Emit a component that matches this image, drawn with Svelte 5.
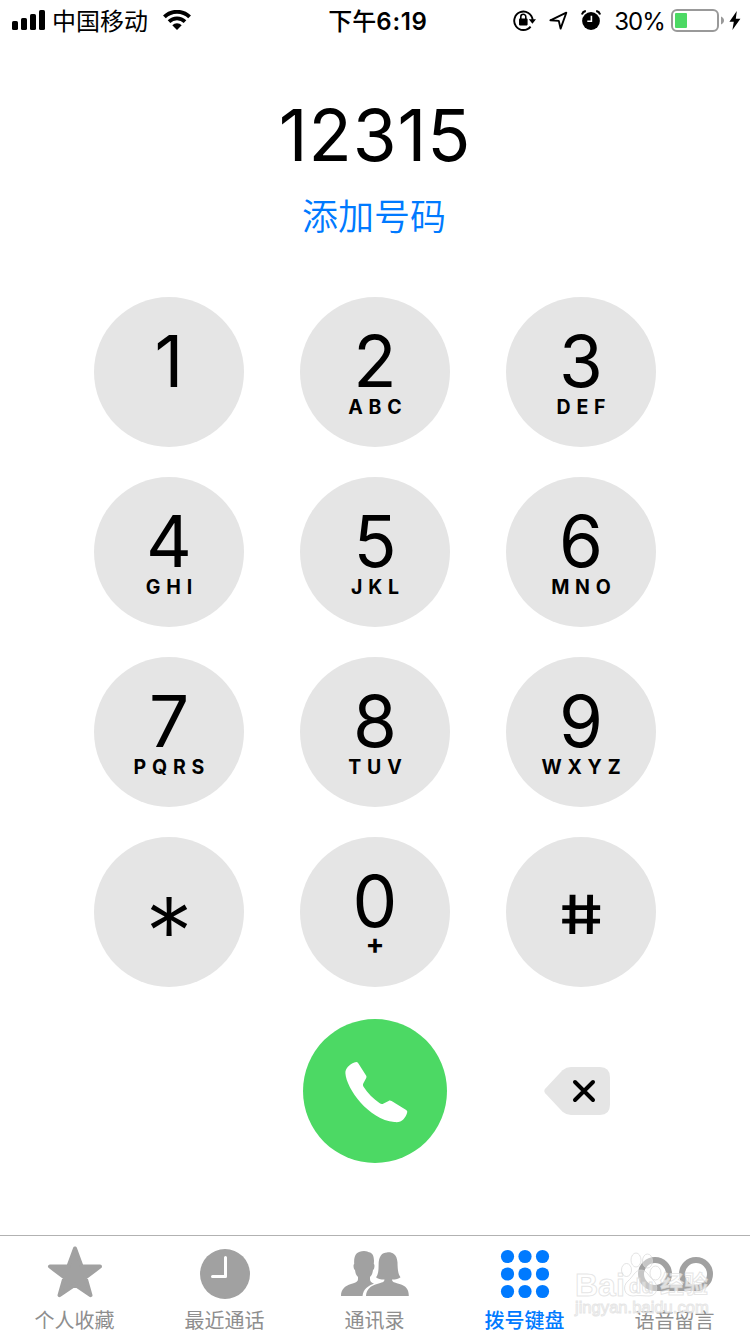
<script>
  let number = $state('12315');

  const keys = [
    { digit: '1', letters: '' },
    { digit: '2', letters: 'ABC' },
    { digit: '3', letters: 'DEF' },
    { digit: '4', letters: 'GHI' },
    { digit: '5', letters: 'JKL' },
    { digit: '6', letters: 'MNO' },
    { digit: '7', letters: 'PQRS' },
    { digit: '8', letters: 'TUV' },
    { digit: '9', letters: 'WXYZ' },
    { digit: '*', kind: 'star' },
    { digit: '0', letters: '+', kind: 'zero' },
    { digit: '#', kind: 'hash' },
  ];

  const tabs = [
    { id: 'favorites', label: '个人收藏' },
    { id: 'recents', label: '最近通话' },
    { id: 'contacts', label: '通讯录' },
    { id: 'keypad', label: '拨号键盘' },
    { id: 'voicemail', label: '语音留言' },
  ];

  let active = $state('keypad');

  const press = (d) => (number += d);
  const erase = () => (number = number.slice(0, -1));
</script>

<div class="phone">
  <header class="status">
    <div class="left">
      <svg class="signal" width="34" height="20" viewBox="0 0 34 20">
        <rect x="0" y="11" width="6" height="9" rx="1.6" />
        <rect x="9" y="8" width="6" height="12" rx="1.6" />
        <rect x="18" y="4" width="6" height="16" rx="1.6" />
        <rect x="27" y="0" width="6" height="20" rx="1.6" />
      </svg>
      <span class="carrier">中国移动</span>
      <svg width="28" height="20" viewBox="0 0 28 20">
        <path d="M1.4 6.9a18 18 0 0 1 25.2 0" fill="none" stroke="#000" stroke-width="3.9" />
        <path d="M6 11.6a11.4 11.4 0 0 1 16 0" fill="none" stroke="#000" stroke-width="3.7" />
        <path d="M9.3 15.3a6.6 6.6 0 0 1 9.4 0L14 20z" />
      </svg>
    </div>
    <div class="time"><span>下午</span>6:19</div>
    <div class="right">
      <!-- rotation lock -->
      <svg width="24" height="22" viewBox="0 0 24 22">
        <path d="M17.6 17.6a9.2 9.2 0 1 1 2-6.6" fill="none" stroke="#000" stroke-width="1.9" />
        <path d="M15.8 10.2h7.2l-3.6 4.5z" />
        <rect x="6" y="9.6" width="8.6" height="6.8" rx=".8" />
        <path d="M7.8 10V7.8a2.5 2.5 0 0 1 5 0V10" fill="none" stroke="#000" stroke-width="1.6" />
      </svg>
      <svg class="arrow" width="19" height="19" viewBox="0 0 19 19">
        <path d="M1.4 9.3 17.3 1.7 11.6 17.6 9.8 9.9z" fill="none" stroke="#000" stroke-width="1.9" stroke-linejoin="round" />
      </svg>
      <svg class="alarm" width="20" height="20" viewBox="0 0 20 20">
        <circle cx="10" cy="11" r="8.9" />
        <path d="M.9 4.4A5 5 0 0 1 4.8.9M15.2.9a5 5 0 0 1 3.9 3.5" fill="none" stroke="#000" stroke-width="2" />
        <path d="M10.4 5.8v5.4H6.3" fill="none" stroke="#fff" stroke-width="1.6" />
      </svg>
      <span class="percent">30%</span>
      <svg width="54" height="23" viewBox="0 0 54 23">
        <rect x="1" y="1" width="46" height="21" rx="5" fill="none" stroke="#999" stroke-width="2" />
        <rect x="4" y="4" width="12" height="15" rx="1" fill="#4cd964" />
        <path d="M50 7.5c4 1.6 4 6.4 0 8z" fill="#999" />
      </svg>
      <svg class="bolt" width="12" height="19" viewBox="0 0 12 19">
        <path d="M7.8 0 .4 10.7h4.4L3.4 19 11.4 7.8H6.8z" />
      </svg>
    </div>
  </header>

  <div class="number">{number}</div>
  <button class="add">添加号码</button>

  <main class="keys">
    {#each keys as key}
      <button class="key {key.kind ?? ''}" onclick={() => press(key.digit)}>
        <span class="digit">{key.digit}</span>
        {#if key.letters}
          <span class="letters">{key.letters}</span>
        {/if}
      </button>
    {/each}
  </main>

  <div class="actions">
    <button class="call" aria-label="呼叫">
      <svg width="64" height="64" viewBox="0 0 64 64">
        <path
          fill="#fff"
          d="M9.3 1.6c1.600-.7 2.900-.8 3.800.5l7.800 12.200c.8 1.200.7 2 .2 3l-2.700 5c-.8 1.500-.5 2.400.5 4 3.600 5.700 9.400 11.500 15.500 15.800 1.700 1.200 2.700 1.300 4.200.5l5-2.700c1.100-.6 1.900-.5 3 .2l14.200 8.600c1.400.9 1.700 1.600 1.300 3-.6 2.200-2 4.800-3.600 6.600-2.300 2.700-5.400 3.200-9.200 2.800C36.300 59.800 24.500 51.500 15.500 41.500 7 32 .8 20 .4 12.300.2 7.500 4.500 3.500 9.300 1.600z"
        />
      </svg>
    </button>
    <button class="erase" aria-label="删除" onclick={erase}>
      <svg width="67" height="48" viewBox="0 0 67 48">
        <path d="M18.5 3.3Q22.5 0 27 0H56Q66 0 66 10.5v27Q66 48 56 48H27q-4.5 0-8.5-3.3L1.2 26.2Q-.6 24 1.2 21.8z" fill="#e5e5e5" />
        <path d="M31 15l18 18M49 15l-18 18" stroke="#000" stroke-width="4" stroke-linecap="round" />
      </svg>
    </button>
  </div>

  <nav class="tabs">
    {#each tabs as tab}
      <button class="tab" class:active={active === tab.id} onclick={() => (active = tab.id)}>
        <svg width="76" height="56" viewBox="0 0 76 56">
          {#if tab.id === 'favorites'}
            <path
              d="M38 4.5 44.6 22.5H63L48.5 33.5 53.5 51.2 38 40.6 22.5 51.2 27.5 33.5 13 22.5H31.4z"
              stroke="currentColor"
              stroke-width="4"
              stroke-linejoin="round"
            />
          {:else if tab.id === 'recents'}
            <circle cx="38" cy="30" r="25" />
            <path d="M38.5 13.5V32.5H25.5" fill="none" stroke="#fff" stroke-width="3" stroke-linecap="round" stroke-linejoin="round" />
          {:else if tab.id === 'contacts'}
            <path d="M4 52c0-7 4-10 10-12 5-1.5 7-2.5 7-5v-2c-2-2-2.6-4-3-7-1.5-.5-2-5.5-.8-6C16.5 11 20 7 27 7c3 0 4 1 5 1.3 4.5.7 5.5 6 4.8 11.7 1.2.5.7 5.5-.8 6-.4 3-1 5-3 7v2c0 2.5 1 3.500 4 4.800-6 2.200-10.500 5-11.500 12.200z" />
            <path d="M29 52c.5-7 4.500-10 11-12 5-1.500 7.500-2 7.500-4.500-4 0-7-.8-8.500-2.300 2-2 2.600-6 2.600-12C41.600 12 45 8.500 50 8.500c1.500-.8 10-1 10.500 10 .1 7 .7 12 3 14.700-1.800 1.500-4.500 2.300-8.500 2.300 0 2.500 2.500 3 7.500 4.500 6.500 2 9.300 5 9.300 12z" />
          {:else if tab.id === 'keypad'}
            {#each [12.5, 30, 47.5] as cy}
              {#each [20.5, 38, 55.5] as cx}
                <circle {cx} {cy} r="6.6" />
              {/each}
            {/each}
          {:else}
            <g fill="none" stroke="currentColor" stroke-width="6">
              <circle cx="18" cy="30" r="14" />
              <circle cx="59" cy="30" r="14" />
              <path d="M18 44h41" />
            </g>
          {/if}
        </svg>
        <span>{tab.label}</span>
      </button>
    {/each}
  </nav>

  <div class="watermark">
    <div class="brand">
      <span class="bai">Bai</span>
      <svg width="42" height="48" viewBox="0 0 42 48">
        <ellipse cx="6.5" cy="20" rx="5" ry="6.5" />
        <ellipse cx="16" cy="10" rx="5" ry="7" />
        <ellipse cx="27.5" cy="11" rx="5" ry="7" />
        <ellipse cx="35.5" cy="23" rx="5.5" ry="7" />
        <path d="M21 20c6 0 8 7 12 10 6 5 5 16-4 16-5 0-11-1-16 0-9 0-11-10-5-15 5-4 7-11 13-11z" />
        <text x="9" y="43" font-size="20">du</text>
      </svg>
      <span class="exp">经验</span>
    </div>
    <div class="site">jingyan.baidu.com</div>
  </div>
</div>

<style>
  :global(body) {
    margin: 0;
    background: #fff;
  }

  .phone {
    position: relative;
    display: flex;
    flex-direction: column;
    width: 750px;
    height: 1334px;
    overflow: hidden;
    background: #fff;
    color: #000;
    font-family: Inter, "Noto Sans CJK SC", sans-serif;
  }

  button {
    padding: 0;
    border: 0;
    background: none;
    color: inherit;
    font: inherit;
  }

  svg {
    display: block;
    flex-shrink: 0;
  }

  .status {
    display: grid;
    grid-template-columns: 1fr auto 1fr;
    align-items: center;
    height: 40px;
    padding: 0 9px 0 12px;
    font-size: 24px;
    line-height: 40px;
  }

  .left,
  .right {
    display: flex;
    align-items: center;
  }

  .right { justify-content: flex-end; }

  .carrier {
    margin: 3px 15px 0 6px;
    line-height: 37px;
  }

  .time {
    padding: 3px 0 0 3px;
    font-weight: 600;
    line-height: 37px;
    letter-spacing: 0.7px;
  }

  .time span {
    font-weight: 500;
    letter-spacing: 0;
  }

  .arrow { margin-left: 12px; }
  .alarm { margin: 0 13px; }

  .percent {
    margin: 3px 6px 0 0;
    line-height: 37px;
    letter-spacing: -0.9px;
  }

  .bolt { margin-left: 4px; }

  .number {
    height: 92px;
    margin-top: 49px;
    font-size: 71px;
    line-height: 92px;
    letter-spacing: 0.9px;
    text-align: center;
  }

  .add {
    align-self: center;
    height: 52px;
    margin: 10px 2px 0 0;
    color: #007aff;
    font-size: 36px;
    font-weight: 350;
    line-height: 52px;
  }

  .keys {
    display: grid;
    grid-template-columns: repeat(3, 150px);
    grid-auto-rows: 150px;
    gap: 30px 56px;
    justify-content: center;
    margin-top: 54px;
  }

  .key {
    display: flex;
    flex-direction: column;
    align-items: center;
    border-radius: 50%;
    background: #e5e5e5;
  }

  .digit {
    height: 72px;
    margin-top: 28px;
    font-size: 71px;
    line-height: 72px;
  }

  .letters {
    height: 20px;
    font-size: 19.5px;
    font-weight: 650;
    line-height: 20px;
    letter-spacing: 5.8px;
    text-indent: 5.8px;
  }

  .star .digit {
    margin-top: 59px;
    font-size: 95px;
    font-weight: 350;
  }

  .hash .digit {
    margin-top: 42px;
    font-size: 54px;
    font-weight: 500;
    transform: scaleX(1.27) skewX(9deg);
  }

  .zero .letters {
    font-size: 28px;
    font-weight: 650;
    line-height: 14px;
    letter-spacing: 0;
    text-indent: 0;
  }

  .actions {
    display: grid;
    grid-template-columns: repeat(3, 150px);
    column-gap: 56px;
    justify-content: center;
    align-items: center;
    height: 144px;
    margin-top: 32px;
  }

  .call {
    display: flex;
    grid-column: 2;
    align-items: center;
    justify-content: center;
    justify-self: center;
    width: 144px;
    height: 144px;
    border-radius: 50%;
    background: #4cd964;
  }

  .call svg { margin: 3px 0 0 3px; }

  .erase {
    justify-self: start;
    margin-left: 38px;
  }

  .tabs {
    display: grid;
    grid-template-columns: repeat(5, 1fr);
    height: 98px;
    margin-top: auto;
    border-top: 1px solid #b2b2b2;
  }

  .tab {
    display: flex;
    flex-direction: column;
    align-items: center;
    padding-top: 8px;
    color: #a1a1a1;
    font-size: 20px;
    line-height: 28px;
  }

  .tab span {
    margin: 7px 1px 0 0;
    color: #8e8e8e;
  }

  .tab svg,
  .status svg { fill: currentColor; }

  .tab.active span { font-weight: 500; }

  .tab.active,
  .tab.active span { color: #007aff; }

  .watermark {
    position: absolute;
    top: 1250px;
    left: 575px;
    width: 140px;
    color: rgba(255, 255, 255, 0.7);
    font-family: "Liberation Sans", "Noto Sans CJK SC", sans-serif;
    white-space: nowrap;
    -webkit-text-stroke: 1px rgba(215, 215, 215, 0.65);
    pointer-events: none;
  }

  .brand {
    display: flex;
    align-items: flex-end;
    height: 48px;
    font-size: 32px;
    font-weight: 700;
    line-height: 26px;
  }

  .bai { width: 45px; }

  .brand svg {
    fill: rgba(255, 255, 255, 0.4);
    stroke: rgba(215, 215, 215, 0.7);
  }

  .exp {
    margin-left: -2px;
    font-size: 24px;
  }

  .site {
    font-size: 16.6px;
    line-height: 20px;
  }
</style>
